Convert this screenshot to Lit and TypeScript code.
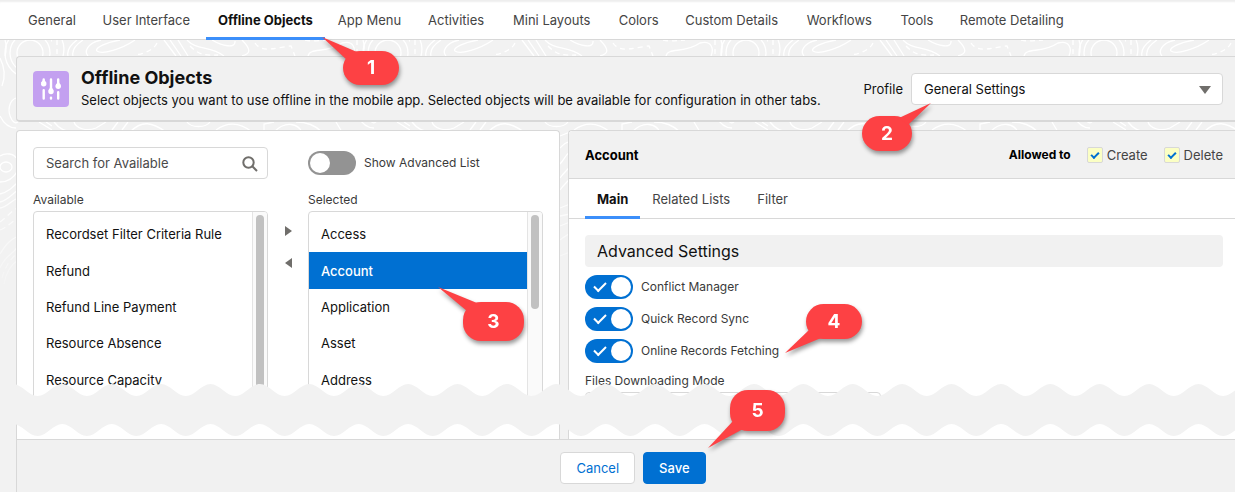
import { LitElement, html, svg, css } from "lit";
import { customElement, property, state } from "lit/decorators.js";
import { classMap } from "lit/directives/class-map.js";
import { styleMap } from "lit/directives/style-map.js";

const baseStyles = css`
  *,
  *::before,
  *::after {
    box-sizing: border-box;
  }
  a {
    color: inherit;
    text-decoration: none;
  }
  button,
  input,
  select {
    font: inherit;
    color: inherit;
    margin: 0;
  }
  ul {
    list-style: none;
    margin: 0;
    padding: 0;
  }
`;

@customElement("tab-bar")
class TabBar extends LitElement {
  @property({ attribute: false }) tabs: string[] = [];
  @property() active = "";
  @property() label = "";
  @property({ type: Boolean }) spaced = false;

  static styles = [
    baseStyles,
    css`
      :host {
        display: block;
        background: #fff;
        border-bottom: 1px solid #d8d8d8;
      }
      .list {
        display: flex;
        padding: 0 16px;
      }
      .spaced {
        gap: 1px;
      }
      .tab {
        display: grid;
        padding: 0 12px;
        line-height: 41px;
        margin-bottom: -1px;
        border-bottom: 3px solid transparent;
        height: 40px;
        color: #444;
        white-space: nowrap;
      }
      /* keeps room for the bold label so tabs do not move when selected */
      .tab::after {
        content: attr(data-label);
        font-weight: 700;
        height: 0;
        overflow: hidden;
        visibility: hidden;
      }
      .active {
        color: #111;
        font-weight: 700;
        border-bottom-color: #3c8ffa;
      }
    `,
  ];

  render() {
    return html`<nav class=${classMap({ list: true, spaced: this.spaced })} aria-label=${this.label}>
      ${this.tabs.map(
        (t) => html`<a
          href="#"
          class=${classMap({ tab: true, active: t === this.active })}
          data-label=${t}
          >${t}</a
        >`
      )}
    </nav>`;
  }
}

@customElement("toggle-switch")
class ToggleSwitch extends LitElement {
  @property() label = "";
  @property({ type: Boolean }) checked = false;

  static styles = [
    baseStyles,
    css`
      :host {
        display: block;
      }
      .row {
        display: flex;
        align-items: center;
        gap: 8px;
        font-size: 12px;
        line-height: 24px;
        color: #3a3a3a;
      }
      .switch {
        appearance: none;
        flex: none;
        display: flex;
        align-items: center;
        width: 48px;
        height: 24px;
        padding: 0 2px;
        border-radius: 12px;
        background: #939393;
      }
      .switch::after {
        content: "";
        width: 20px;
        height: 20px;
        border-radius: 50%;
        background: #fff;
      }
      .switch:checked {
        background: #0070d2;
        justify-content: space-between;
        padding-left: 9px;
      }
      .switch:checked::before {
        content: "";
        width: 12px;
        height: 7px;
        margin-top: -4px;
        border: solid #fff;
        border-width: 0 0 2px 2px;
        transform: rotate(-45deg);
      }
    `,
  ];

  render() {
    return html`<label class="row">
      <input class="switch" type="checkbox" role="switch" .checked=${this.checked} />
      ${this.label}
    </label>`;
  }
}

@customElement("object-list")
class ObjectList extends LitElement {
  @property() label = "";
  @property({ attribute: false }) items: string[] = [];
  @property() selected = "";
  @property({ type: Boolean }) long = false;

  static styles = [
    baseStyles,
    css`
      :host {
        display: block;
      }
      .label {
        font-size: 12px;
        line-height: 18px;
        color: #3a3a3a;
        padding-bottom: 2px;
      }
      .box {
        display: flex;
        height: 204px;
        border: 1px solid #d8d8d8;
        border-radius: 4px;
        overflow: hidden;
        background: #fff;
      }
      .items {
        flex: 1;
        min-width: 0;
        display: grid;
        grid-auto-rows: 1fr;
        height: 186px;
        padding-top: 4px;
      }
      .item {
        display: flex;
        align-items: center;
        padding: 0 12px;
        color: #111;
        white-space: nowrap;
        overflow: hidden;
      }
      .selected {
        background: #0070d2;
        color: #fff;
        font-weight: 500;
      }
      .track {
        flex: none;
        width: 15px;
        padding: 3px;
        border-left: 1px solid #e4e4e4;
        background: #fafafa;
      }
      .thumb {
        width: 8px;
        height: 94px;
        border-radius: 4px;
        background: #c1c1c1;
      }
      .tall {
        height: 100%;
      }
    `,
  ];

  render() {
    return html`<div class="label" id="label">${this.label}</div>
      <div class="box">
        <ul class="items" role="listbox" aria-labelledby="label">
          ${this.items.map(
            (i) => html`<li
              role="option"
              aria-selected=${i === this.selected}
              class=${classMap({ item: true, selected: i === this.selected })}
            >
              ${i}
            </li>`
          )}
        </ul>
        <div class="track"><div class=${classMap({ thumb: true, tall: this.long })}></div></div>
      </div>`;
  }
}

interface Callout {
  n: number;
  x: number;
  y: number;
  w: number;
  h: number;
  tail: string;
}

/* tails are drawn relative to the top left corner of each bubble */
const CALLOUTS: Callout[] = [
  { n: 1, x: 343, y: 51, w: 56, h: 34, tail: "M-21 -14 L14 1 L4 9 Z" },
  { n: 2, x: 862, y: 116, w: 50, h: 35, tail: "M69 -13 L37 2 L46 9 Z" },
  { n: 3, x: 463, y: 302, w: 61, h: 39, tail: "M-25 -15 L14 1 L4 9 Z" },
  { n: 4, x: 806, y: 304, w: 56, h: 35, tail: "M-21 49 L3 26 L15 34 Z" },
  { n: 5, x: 730, y: 390, w: 55, h: 41, tail: "M-22 58 L3 31 L13 39 Z" },
];

@customElement("step-callout")
class StepCallout extends LitElement {
  @property({ attribute: false }) data!: Callout;

  static styles = [
    baseStyles,
    css`
      :host {
        display: contents;
      }
      .bubble {
        position: absolute;
        display: flex;
        align-items: center;
        justify-content: center;
        border-radius: 18px;
        background: #fd4144;
        color: #fff;
        font-size: 19px;
        font-weight: 700;
        line-height: 32px;
        filter: drop-shadow(1px 3px 2px rgba(0, 0, 0, 0.4));
      }
      .tail {
        position: absolute;
        left: 0;
        top: 0;
        width: 1px;
        height: 1px;
        overflow: visible;
        fill: #fd4144;
      }
    `,
  ];

  render() {
    const { n, x, y, w, h, tail } = this.data;
    return html`<div
      class="bubble"
      style=${styleMap({ left: `${x}px`, top: `${y}px`, width: `${w}px`, height: `${h}px` })}
    >
      <svg class="tail" aria-hidden="true"><path d=${tail} /></svg>${n}
    </div>`;
  }
}

/* torn-paper band: wavy upper and lower edges repeated along the full width */
const PERIOD = 49.4;
const wavePath = (() => {
  const count = 80;
  const start = 62.3 - PERIOD * 2;
  const half = PERIOD / 2;
  let top = `M${start} 0`;
  let bottom = "";
  for (let i = 0; i < count; i++) {
    top += `c9 0 ${half - 9} 12 ${half} 12s${half - 9} -12 ${half} -12`;
    bottom += `c-9 0 ${9 - half} 12 ${-half} 12s${9 - half} -12 ${-half} -12`;
  }
  return `${top}v40${bottom}Z`;
})();

const topography = svg`
  <defs>
    <pattern id="topo" x="52" y="0" width="358" height="270" patternUnits="userSpaceOnUse">
      <g fill="none" stroke="#fff" stroke-width="1.3">
        <path d="M68 0C55 2 42 8 45 11C50 15 70 9 83 0M49 0C35 3 32 12 36 16M31 0C22 6 20 12 21 16M25 0C17 6 15 12 16 16M10 0C13 6 12 12 11 16"/>
        <path d="M112 0L124 16M118 0L129 16M126 0L136 16M135 0C145 11 158 5 172 16M160 0C170 6 184 9 183 1M190 0C200 10 198 14 190 16"/>
        <path d="M256 16C258 7 274 14 290 3C302 0 304 9 301 16M311 0C313 6 312 12 311 16"/>
        <circle cx="336" cy="13" r="13"/>
        <circle cx="336" cy="13" r="20"/>
        <circle cx="336" cy="13" r="25"/>
        <path stroke-dasharray="5 4" d="M105 3C102 10 92 14 82 15M138 6C146 14 152 16 166 15M203 3C210 14 225 7 239 6L243 16M253 0C262 2 270 0 275 0M305 0V16M5 0V16"/>
        <path d="M22 82C24 88 34 92 44 88L54 82M60 90L66 82M70 90L76 82M78 92C90 80 100 82 114 92M135 82C139 88 154 88 158 82M164 90C178 80 190 84 200 92M212 90V84L222 82M222 92C234 80 246 84 250 92M244 82C256 82 264 86 270 92M284 82L290 92M345 82L358 90M352 82L358 86M2 82C8 90 16 92 22 92"/>
        <path d="M306 18C310 26 312 36 308 46M322 58C316 60 312 70 318 80C322 86 326 82 326 74M306 76C310 84 316 88 322 88"/>
        <ellipse cx="312" cy="127" rx="6" ry="5"/>
        <path d="M306 116C312 112 320 114 322 118M306 142C314 142 320 138 324 130M306 154C314 152 318 148 324 142M306 162C314 160 318 154 324 150M306 168C312 168 318 160 324 158M306 214C312 204 316 200 324 196M310 244C312 232 318 224 324 220M306 228C312 214 318 216 324 206"/>
        <path stroke-dasharray="6 4" d="M306 182C312 178 318 170 324 168M306 190C312 188 320 180 324 178M308 238C312 224 318 218 324 212"/>
        <path d="M150 96L160 92M150 108C154 104 156 102 160 102M150 124C154 120 156 114 160 112M150 138C154 132 158 130 160 126M150 150C154 144 158 142 160 138M150 168L160 164M150 176L160 174M150 186L160 182M150 200C154 196 158 196 160 192M150 216L160 212"/>
      </g>
    </pattern>
    <linearGradient id="fade" x1="0" y1="0" x2="0" y2="1">
      <stop offset="0" stop-color="#fff"/>
      <stop offset="0.5" stop-color="#fff"/>
      <stop offset="1" stop-color="#000"/>
    </linearGradient>
    <mask id="fadeMask"><rect width="100%" height="270" fill="url(#fade)"/></mask>
  </defs>
  <rect width="100%" height="270" fill="url(#topo)" mask="url(#fadeMask)"/>`;

@customElement("app-root")
class AppRoot extends LitElement {
  @state() private tabs = [
    "General",
    "User Interface",
    "Offline Objects",
    "App Menu",
    "Activities",
    "Mini Layouts",
    "Colors",
    "Custom Details",
    "Workflows",
    "Tools",
    "Remote Detailing",
  ];
  @state() private available = [
    "Recordset Filter Criteria Rule",
    "Refund",
    "Refund Line Payment",
    "Resource Absence",
    "Resource Capacity",
  ];
  @state() private chosen = ["Access", "Account", "Application", "Asset", "Address"];

  static styles = [
    baseStyles,
    css`
      :host {
        display: flex;
        flex-direction: column;
        position: relative;
        min-height: 100vh;
        overflow: hidden;
        background: #f2f2f2;
        color: #111;
        font-family: Inter, "Open Sans", sans-serif;
        font-size: 13px;
        line-height: 20px;
      }
      .top {
        position: relative;
        margin-bottom: 16px;
        box-shadow: inset 0 3px 2px -1px #eee;
      }
      .backdrop {
        position: absolute;
        left: 0;
        top: 40px;
        width: 100%;
        height: 270px;
      }
      .header {
        position: relative;
        display: flex;
        align-items: center;
        gap: 12px;
        margin-left: 16px;
        padding: 0 12px 0 16px;
        height: 66px;
        background: #f1f1f1;
        border: 1px solid #d8d8d8;
        border-width: 1px 0 2px 1px;
        border-radius: 4px 0 0 4px;
      }
      .logo {
        flex: none;
        width: 36px;
        height: 36px;
      }
      .heading {
        flex: 1;
        min-width: 0;
        padding-bottom: 2px;
      }
      .title {
        margin: 0;
        font-size: 18px;
        line-height: 24px;
        font-weight: 700;
      }
      .text {
        margin: 0;
      }
      .profile {
        display: flex;
        align-items: center;
        gap: 8px;
      }
      .picker {
        position: relative;
        width: 312px;
      }
      .select {
        appearance: none;
        display: block;
        width: 100%;
        height: 32px;
        padding: 0 12px;
        background: #fff;
        border: 1px solid #d8d8d8;
        border-radius: 4px;
      }
      .caret {
        position: absolute;
        right: 12px;
        top: 13px;
        width: 12px;
        height: 8px;
        pointer-events: none;
        fill: #706e6b;
      }
      .work {
        position: relative;
        flex: 1;
        display: grid;
        grid-template-columns: minmax(0, 544fr) minmax(0, 667fr);
        gap: 8px;
        padding: 8px 0 0 16px;
      }
      .panel {
        background: #fff;
        border: 1px solid #d8d8d8;
        border-bottom: 0;
        border-radius: 4px 4px 0 0;
      }
      .lists {
        display: grid;
        grid-template-columns: minmax(0, 1fr) 40px minmax(0, 1fr);
        grid-template-rows: 32px auto;
        row-gap: 12px;
        align-content: start;
        padding: 16px 16px 24px;
      }
      .search {
        position: relative;
      }
      .field {
        width: 100%;
        height: 32px;
        padding: 0 40px 0 12px;
        background: #fff;
        border: 1px solid #d8d8d8;
        border-radius: 4px;
      }
      .field::placeholder {
        color: #4a4a4a;
        opacity: 1;
      }
      .lens {
        position: absolute;
        right: 10px;
        top: 9px;
        width: 16px;
        height: 16px;
        fill: none;
        stroke: #706e6b;
        stroke-width: 2;
      }
      .advanced {
        grid-column: 3;
        align-self: center;
      }
      .movers {
        display: flex;
        flex-direction: column;
        align-items: center;
        gap: 16px;
        padding-top: 32px;
      }
      .mover {
        display: flex;
        align-items: center;
        justify-content: center;
        width: 16px;
        height: 16px;
        padding: 0;
        border: 0;
        background: none;
        fill: #706e6b;
      }
      .detail {
        border-right: 0;
        border-top-right-radius: 0;
      }
      .bar {
        display: flex;
        align-items: center;
        height: 48px;
        padding: 0 12px 0 16px;
        background: #f1f1f1;
        border-bottom: 1px solid #d8d8d8;
        border-top-left-radius: 4px;
      }
      .name {
        flex: 1;
        margin: 0;
        font-size: 13px;
        font-weight: 700;
        color: #000;
      }
      .allowed {
        font-size: 12px;
        font-weight: 700;
        color: #000;
      }
      .check {
        display: flex;
        align-items: center;
        gap: 4px;
        margin-left: 16px;
        color: #444;
      }
      .box {
        appearance: none;
        display: flex;
        justify-content: center;
        width: 16px;
        height: 16px;
        border: 1px solid #d8d8d8;
        border-radius: 2px;
        background: #fbffc4;
      }
      .box:checked::before {
        content: "";
        width: 8px;
        height: 5px;
        margin-top: 4px;
        border: solid #0070d2;
        border-width: 0 0 2px 2px;
        transform: rotate(-45deg);
      }
      .body {
        display: grid;
        gap: 8px;
        padding: 16px 12px 0 16px;
      }
      .section {
        margin: 0;
        padding: 0 12px;
        font-size: 16px;
        line-height: 32px;
        font-weight: 400;
        background: #f1f1f1;
        border-radius: 4px;
      }
      .mode {
        display: grid;
        gap: 1px;
        font-size: 12px;
        line-height: 20px;
        color: #3a3a3a;
      }
      .mode .select {
        width: 296px;
      }
      .wave {
        position: absolute;
        left: 0;
        bottom: 3px;
        width: 100%;
        height: 52px;
        fill: #f2f2f2;
      }
      .footer {
        position: relative;
        display: flex;
        justify-content: center;
        gap: 8px;
        margin-left: 16px;
        padding: 12px 0 8px 14px;
        background: #f1f1f1;
        border: 1px solid #d8d8d8;
        border-width: 1px 0 0 1px;
      }
      .button {
        height: 32px;
        padding: 0 15px;
        border: 1px solid #d8d8d8;
        border-radius: 4px;
        background: #fff;
        color: #0070d2;
      }
      .brand {
        background: #0070d2;
        border-color: #0070d2;
        color: #fff;
        font-weight: 500;
      }
    `,
  ];

  render() {
    return html`
      <svg class="backdrop" aria-hidden="true">${topography}</svg>
      <tab-bar class="top" label="Configuration" .tabs=${this.tabs} active="Offline Objects" spaced></tab-bar>

      <header class="header">
        <svg class="logo" viewBox="0 0 36 36" aria-hidden="true">
          <rect width="36" height="36" rx="4" fill="#c3a0f0" />
          <g stroke="#fff" stroke-width="2.4" stroke-linecap="round">
            <path d="M10.7 8.5V13M10.7 19.2V27.6M18 8.5V20M18 26.6V27.6M25.2 8.5V15M25.2 21.2V27.6" />
          </g>
          <g fill="#fff">
            <path d="M10.7 8L13.3 12H8.1ZM18 15L20.6 19.5H15.4ZM25.2 10L27.8 14.5H22.6Z" />
            <circle cx="10.7" cy="12.8" r="2.7" />
            <circle cx="18" cy="20.5" r="2.7" />
            <circle cx="25.2" cy="15.2" r="2.7" />
          </g>
        </svg>
        <div class="heading">
          <h1 class="title">Offline Objects</h1>
          <p class="text">
            Select objects you want to use offline in the mobile app. Selected objects will be
            available for configuration in other tabs.
          </p>
        </div>
        <div class="profile">
          <label for="profile">Profile</label>
          <div class="picker">
            <select class="select" id="profile">
              <option>General Settings</option>
            </select>
            <svg class="caret" viewBox="0 0 12 8" aria-hidden="true"><path d="M0 0H12L6 8Z" /></svg>
          </div>
        </div>
      </header>

      <main class="work">
        <section class="panel lists">
          <div class="search">
            <input class="field" type="search" placeholder="Search for Available" aria-label="Search for Available" />
            <svg class="lens" viewBox="0 0 16 16" aria-hidden="true">
              <circle cx="6.5" cy="6.5" r="5.2" />
              <path d="M10.3 10.3L15 15" />
            </svg>
          </div>
          <toggle-switch class="advanced" label="Show Advanced List"></toggle-switch>
          <object-list label="Available" .items=${this.available} long></object-list>
          <div class="movers">
            <button class="mover" aria-label="Add to selected">
              <svg width="7" height="10" viewBox="0 0 7 10"><path d="M0 0L7 5L0 10Z" /></svg>
            </button>
            <button class="mover" aria-label="Remove from selected">
              <svg width="7" height="10" viewBox="0 0 7 10"><path d="M7 0L0 5L7 10Z" /></svg>
            </button>
          </div>
          <object-list label="Selected" .items=${this.chosen} selected="Account"></object-list>
        </section>

        <section class="panel detail">
          <div class="bar">
            <h2 class="name">Account</h2>
            <span class="allowed">Allowed to</span>
            <label class="check"><input class="box" type="checkbox" checked />Create</label>
            <label class="check"><input class="box" type="checkbox" checked />Delete</label>
          </div>
          <tab-bar label="Account settings" .tabs=${["Main", "Related Lists", "Filter"]} active="Main"></tab-bar>
          <div class="body">
            <h3 class="section">Advanced Settings</h3>
            <toggle-switch label="Conflict Manager" checked></toggle-switch>
            <toggle-switch label="Quick Record Sync" checked></toggle-switch>
            <toggle-switch label="Online Records Fetching" checked></toggle-switch>
            <div class="mode">
              <label for="mode">Files Downloading Mode</label>
              <select class="select" id="mode"></select>
            </div>
          </div>
        </section>

        <svg class="wave" aria-hidden="true"><path d=${wavePath} /></svg>
      </main>

      <footer class="footer">
        <button class="button">Cancel</button>
        <button class="button brand">Save</button>
      </footer>

      ${CALLOUTS.map((c) => html`<step-callout .data=${c}></step-callout>`)}
    `;
  }
}
